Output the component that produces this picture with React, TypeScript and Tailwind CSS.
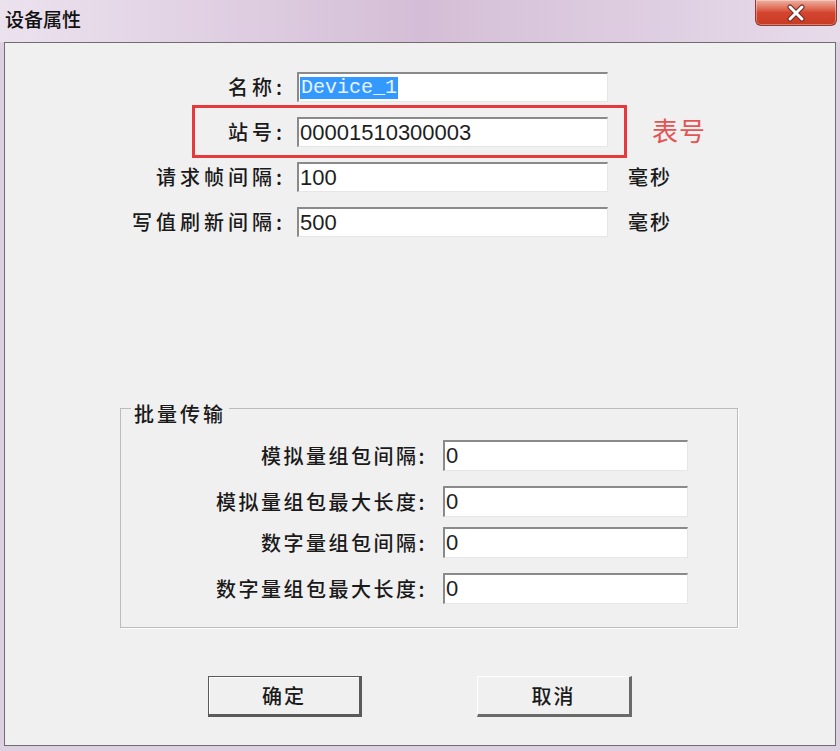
import React from "react";

const cjk = { fontFamily: '"Noto Sans CJK SC", "Noto Sans", sans-serif' };

function Field({ value, selected, w, h }: { value: string; selected?: boolean; w: string; h: string }) {
  return (
    <div
      className={`${w} ${h} bg-white border-t-2 border-l-2 border-t-[#8a8a8a] border-l-[#8a8a8a] border-r border-b border-r-[#e6e6e6] border-b-[#e6e6e6] flex items-center pl-[1px]`}
    >
      {selected ? (
        <span
          className="bg-[#3399ff] text-[#e8f3ff] text-[20px] leading-[22px] px-[1px]"
          style={{ fontFamily: '"Liberation Mono", monospace' }}
        >
          {value}
        </span>
      ) : (
        <span
          className="text-[#1e1e1e] text-[22px] leading-[24px]"
          style={{ fontFamily: '"Liberation Sans", Arial, sans-serif' }}
        >
          {value}
        </span>
      )}
    </div>
  );
}

function TopRow({ label, value, suffix, selected, children }: { label: string; value: string; suffix?: string; selected?: boolean; children?: React.ReactNode }) {
  return (
    <div className="relative flex items-center h-[30px]">
      <div className="w-[281px] text-right text-[20px] leading-[24px] tracking-[4px] font-medium text-[#1a1a1a]" style={cjk}>
        {label}
      </div>
      <div className="ml-[11px]">
        <Field value={value} selected={selected} w="w-[311px]" h="h-[30px]" />
      </div>
      {suffix && (
        <div className="ml-[20px] text-[20px] leading-[24px] tracking-[2px] font-medium text-[#1a1a1a]" style={cjk}>
          {suffix}
        </div>
      )}
      {children}
    </div>
  );
}

function GroupRow({ label, mt }: { label: string; mt: string }) {
  return (
    <div className={`flex items-center h-[31px] ${mt}`}>
      <div className="w-[306px] text-right text-[20px] leading-[24px] tracking-[2.5px] font-medium text-[#1a1a1a]" style={cjk}>
        {label}
      </div>
      <div className="ml-[16px]">
        <Field value="0" w="w-[245px]" h="h-[31px]" />
      </div>
    </div>
  );
}

export default function App() {
  return (
    <div className="w-[840px] h-[751px] flex flex-col bg-[#ddd0e1] overflow-hidden" style={cjk}>
      {/* Title bar */}
      <div className="h-[42px] shrink-0 flex items-start bg-gradient-to-r from-[#ece2ee] via-[#d4bed7] to-[#e7dbea]">
        <span className="mt-[6px] ml-[5px] text-[19px] leading-[26px] text-[#111] font-medium" style={cjk}>
          设备属性
        </span>
        <div className="ml-auto mr-[3px] w-[82px] h-[26px] rounded-b-[6px] border border-t-0 border-[#8b3b33] bg-gradient-to-b from-[#eeb1a2] via-[#d4452f] to-[#c73a22] flex items-center justify-center shadow-[inset_0_0_0_1px_rgba(255,255,255,0.35)]">
          <svg width="22" height="18" viewBox="0 0 22 18">
            <path d="M5 3 L17 15 M17 3 L5 15" stroke="#6b2a22" strokeWidth="5" strokeLinecap="round" />
            <path d="M5 3 L17 15 M17 3 L5 15" stroke="#ffffff" strokeWidth="3" strokeLinecap="round" />
          </svg>
        </div>
      </div>

      {/* Client area */}
      <div className="flex-1 mx-[4px] mb-[5px] border border-[#6e6e6e] bg-[#f0f0f0] flex flex-col">
        <div className="mt-[29px] flex flex-col gap-[15px]">
          <TopRow label="名称:" value="Device_1" selected />
          <TopRow label="站号:" value="00001510300003">
            <div className="absolute left-[187px] top-[-12px] w-[435px] h-[53px] border-[3px] border-[#e5393b]" />
            <div
              className="absolute left-[647px] top-[-3px] text-[26px] leading-[32px] tracking-[1px] text-[#e25555]"
              style={cjk}
            >
              表号
            </div>
          </TopRow>
          <TopRow label="请求帧间隔:" value="100" suffix="毫秒" />
          <TopRow label="写值刷新间隔:" value="500" suffix="毫秒" />
        </div>

        <fieldset className="mt-[155px] ml-[115px] w-[618px] h-[236px] border border-[#bcbcbc] shadow-[1px_1px_0_#ffffff] p-0 m-0">
          <legend
            className="ml-[10px] px-[3px] pt-[12px] text-[20px] leading-[20px] tracking-[3px] font-medium text-[#1a1a1a]"
            style={cjk}
          >
            批量传输
          </legend>
          <GroupRow label="模拟量组包间隔:" mt="mt-[16px]" />
          <GroupRow label="模拟量组包最大长度:" mt="mt-[15px]" />
          <GroupRow label="数字量组包间隔:" mt="mt-[10px]" />
          <GroupRow label="数字量组包最大长度:" mt="mt-[15px]" />
        </fieldset>

        <div className="mt-[48px] flex">
          <button
            className="ml-[203px] w-[154px] h-[41px] bg-[#f0f0f0] border border-[#5a5a5a] border-r-[3px] border-b-[3px] shadow-[inset_1px_1px_0_#ffffff] flex items-center justify-center text-[20px] tracking-[2px] text-[#1a1a1a] font-medium"
            style={cjk}
          >
            确定
          </button>
          <button
            className="ml-[115px] w-[155px] h-[41px] bg-[#f0f0f0] border border-t-[#ffffff] border-l-[#ffffff] border-r-[3px] border-b-[3px] border-r-[#6a6a6a] border-b-[#6a6a6a] flex items-center justify-center text-[20px] tracking-[2px] text-[#1a1a1a] font-medium"
            style={cjk}
          >
            取消
          </button>
        </div>
      </div>
    </div>
  );
}
